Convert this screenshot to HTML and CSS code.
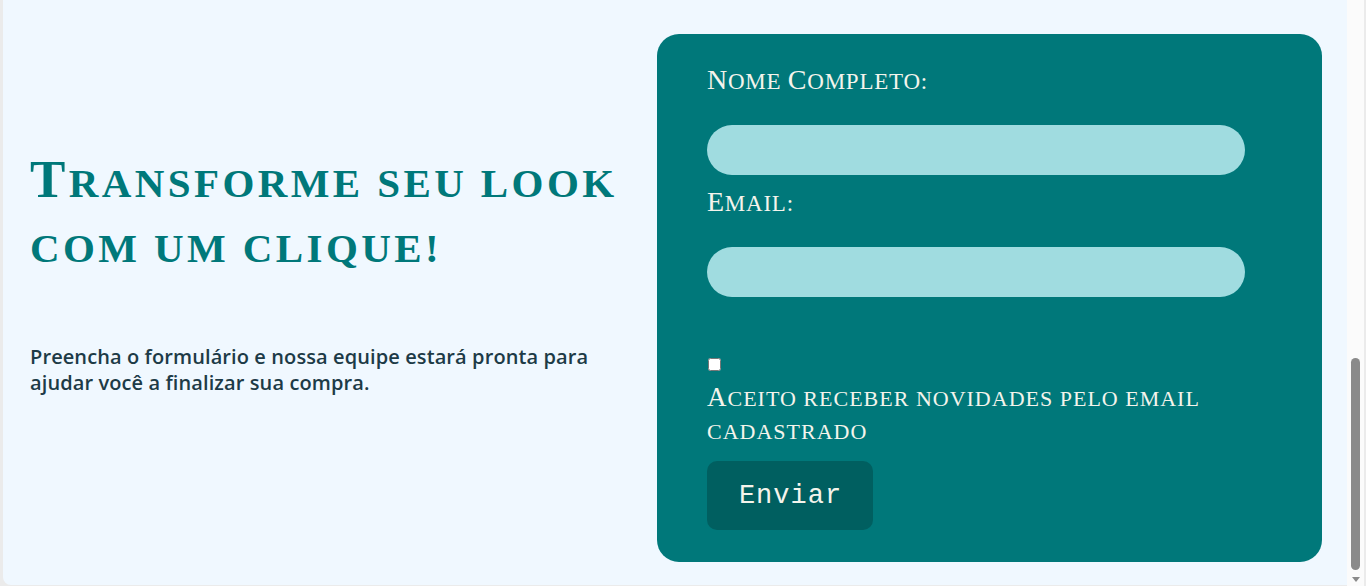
FILE: index.html
```html
<!DOCTYPE html>
<html lang="pt-BR">
<head>
<meta charset="utf-8">
<title>Transforme seu look</title>
<link rel="stylesheet" href="styles.css">
</head>
<body>
<div class="window">
  <main class="page">
    <section class="intro">
      <h1 class="title">Transforme seu look com um clique!</h1>
      <p class="lead">Preencha o formulário e nossa equipe estará pronta para ajudar você a finalizar sua compra.</p>
    </section>
    <form class="card">
      <label class="field-label" for="nome">Nome <span class="cap">C</span>ompleto:</label>
      <input class="field" id="nome" type="text">
      <label class="field-label" for="email">Email:</label>
      <input class="field" id="email" type="email">
      <div class="consent">
        <input class="check" id="news" type="checkbox">
        <label class="consent-label" for="news">Aceito receber novidades pelo email cadastrado</label>
      </div>
      <button class="send" type="button">Enviar</button>
    </form>
  </main>
  <div class="scrollbar">
    <div class="track"><div class="thumb"></div></div>
    <div class="arrow"></div>
  </div>
</div>
</body>
</html>
```
FILE: styles.css
```css
html, body {
  margin: 0;
  height: 586px;
  overflow: hidden;
  background: #ebebeb;
}

.window {
  display: flex;
  height: 586px;
}

.page {
  flex: 1;
  margin-left: 3px;
  margin-bottom: 1px;
  background: #f0f8ff;
  border-bottom-left-radius: 8px;
  display: flex;
  align-items: flex-start;
  gap: 30px;
  padding: 34px 25px 0 27px;
  box-sizing: border-box;
}

.intro {
  width: 597px;
  flex: none;
  padding-top: 113px;
}

.title {
  margin: 0;
  font-family: "Liberation Serif", serif;
  text-transform: uppercase;
  font-weight: bold;
  font-size: 41px;
  line-height: 65px;
  color: #00787a;
  letter-spacing: 3.4px;
}

.title::first-letter {
  font-size: 53px;
}

.lead {
  margin: 63px 0 0;
  max-width: 565px;
  font-family: "Open Sans", sans-serif;
  font-weight: 600;
  font-size: 20px;
  line-height: 26px;
  letter-spacing: 0.1px;
  color: #1d3b47;
}

.card {
  width: 665px;
  height: 528px;
  flex: none;
  box-sizing: border-box;
  background: #00787a;
  border-radius: 22px;
  padding: 28px 50px 0;
  display: flex;
  flex-direction: column;
  align-items: flex-start;
}

.field-label {
  font-family: "Liberation Serif", serif;
  text-transform: uppercase;
  font-size: 23px;
  line-height: 36px;
  color: #f4f4ec;
  letter-spacing: 0.75px;
}

.field-label::first-letter,
.field-label .cap {
  font-size: 28px;
}

.field {
  width: 538px;
  height: 50px;
  box-sizing: border-box;
  border: none;
  border-radius: 25px;
  background: #a0dce0;
  margin: 25px 0 9px;
  outline: none;
}

.consent {
  margin-top: 52px;
  display: flex;
  flex-direction: column;
  align-items: flex-start;
}

.check {
  margin: 0 0 10px 1px;
  width: 13px;
  height: 13px;
}

.consent-label {
  font-family: "Liberation Serif", serif;
  text-transform: uppercase;
  font-size: 22px;
  line-height: 33px;
  color: #f4f4ec;
  width: 540px;
  letter-spacing: 1px;
}

.consent-label::first-letter {
  font-size: 27px;
}

.send {
  margin-top: 13px;
  width: 166px;
  height: 69px;
  flex: none;
  border: none;
  border-radius: 10px;
  background: #005f60;
  color: #f4f4ec;
  font-family: "Liberation Mono", monospace;
  font-size: 27px;
  letter-spacing: 1px;
  padding: 0 0 0 1px;
}

.scrollbar {
  width: 17px;
  margin-right: 2px;
  background: #fbfbfb;
  display: flex;
  flex-direction: column;
  align-items: center;
  padding-bottom: 4px;
  box-sizing: border-box;
}

.track {
  flex: 1;
  display: flex;
  flex-direction: column;
  justify-content: flex-end;
  padding-bottom: 7px;
}

.thumb {
  width: 9px;
  height: 212px;
  border-radius: 5px;
  background: #8a8a8a;
}

.arrow {
  width: 0;
  height: 0;
  border-left: 4px solid transparent;
  border-right: 4px solid transparent;
  border-top: 5px solid #8a8a8a;
}
```
